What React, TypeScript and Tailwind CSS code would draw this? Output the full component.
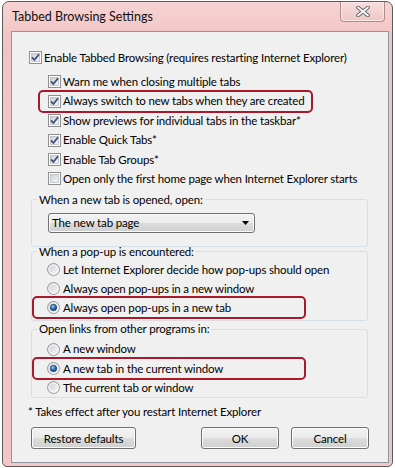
import React, { useId } from "react";

const Checkbox = ({ checked }: { checked: boolean }) => {
  const id = useId();
  return (
    <svg width="13" height="13" viewBox="0 0 13 13" className="shrink-0">
      <defs>
        <linearGradient id={id} x1="0" y1="0" x2="1" y2="1">
          <stop offset="0" stopColor="#cbcfd5" />
          <stop offset="1" stopColor="#f7f7f7" />
        </linearGradient>
      </defs>
      <rect x="0.5" y="0.5" width="12" height="12" fill="#ffffff" stroke="#8e8f8f" />
      <rect x="2.5" y="2.5" width="8" height="8" fill={`url(#${id})`} stroke="#b8bcc2" strokeWidth="0.8" />
      {checked && (
        <path d="M3 6.3 L5.4 9 L10 3.2" fill="none" stroke="#3d4f7c" strokeWidth="1.8" strokeLinejoin="round" />
      )}
    </svg>
  );
};

const Radio = ({ checked }: { checked: boolean }) => {
  const id = useId();
  return (
    <svg width="13" height="13" viewBox="0 0 13 13" className="shrink-0">
      <defs>
        <linearGradient id={id + "a"} x1="0" y1="0" x2="1" y2="1">
          <stop offset="0" stopColor="#c9ccd1" />
          <stop offset="1" stopColor="#fafafa" />
        </linearGradient>
        <radialGradient id={id + "b"} cx="0.4" cy="0.35" r="0.7">
          <stop offset="0" stopColor="#9fd0f5" />
          <stop offset="0.5" stopColor="#2f6fad" />
          <stop offset="1" stopColor="#173d6b" />
        </radialGradient>
      </defs>
      <circle cx="6.5" cy="6.5" r="6" fill={`url(#${id}a)`} stroke="#979a9e" />
      <circle cx="6.5" cy="6.5" r="4.5" fill="none" stroke="#ffffff" strokeWidth="0.8" />
      {checked && <circle cx="6.5" cy="6.5" r="3.3" fill={`url(#${id}b)`} stroke="#1f3f66" strokeWidth="0.6" />}
    </svg>
  );
};

const Highlight = ({ left, width }: { left: number; width: number }) => (
  <span
    className="absolute top-[-2px] h-[23px] border-[2.5px] border-[#a9192c] rounded-[5px] pointer-events-none"
    style={{ left, width }}
  />
);

const CheckRow = ({ label, checked, boxed }: { label: string; checked: boolean; boxed?: boolean }) => (
  <div className="relative h-[19.4px] flex items-center gap-[2px]">
    {boxed && <Highlight left={-10} width={275} />}
    <Checkbox checked={checked} />
    <span>{label}</span>
  </div>
);

const RadioRow = ({ label, checked, boxed }: { label: string; checked?: boolean; boxed?: boolean }) => (
  <div className="relative h-[19.2px] flex items-center gap-[3px]">
    {boxed && <Highlight left={-15} width={274} />}
    <Radio checked={!!checked} />
    <span>{label}</span>
  </div>
);

const Button = ({ label, width }: { label: string; width: string }) => (
  <button
    className={`${width} h-[22px] border border-[#707070] rounded-[3px] bg-[linear-gradient(#f2f2f2_0%,#ebebeb_50%,#dddddd_50%,#cfcfcf_100%)] shadow-[inset_0_0_0_1px_#fcfcfc] text-black leading-none`}
  >
    {label}
  </button>
);

export default function App() {
  return (
    <div className="w-[395px] h-[468px] bg-white pt-[1px] text-[11.5px] tracking-[-0.15px] leading-4 text-black whitespace-nowrap font-['Lato',sans-serif]">
      <div className="ml-[2px] w-[391px] h-[466px] border border-[#5b5b5b] rounded-t-[7px] rounded-b-[5px] bg-[linear-gradient(#f7d3d3,#f2c3c3_40px,#f3c6c6)] flex flex-col overflow-hidden">
        <div className="h-[29px] flex items-start justify-between pl-[9px] pr-[7px]">
          <span className="self-center text-[12.5px] tracking-normal text-[#111]">Tabbed Browsing Settings</span>
          <div className="w-[45px] h-[20px] border border-t-0 border-[#b08d8d] rounded-b-[4px] bg-[linear-gradient(#f8dede,#efc6c6)] shadow-[inset_0_0_0_1px_#fbe9e9] flex items-center justify-center">
            <svg width="14" height="11" viewBox="0 0 14 11">
              <path d="M2 1.5 L12 9.5 M12 1.5 L2 9.5" stroke="#5e5e66" strokeWidth="3.6" strokeLinecap="round" />
              <path d="M2 1.5 L12 9.5 M12 1.5 L2 9.5" stroke="#ffffff" strokeWidth="1.8" strokeLinecap="round" />
            </svg>
          </div>
        </div>
        <div className="flex-1 flex pl-[8px] pr-[3px] pb-[3px]">
          <div className="flex-1 flex flex-col border border-[#8d97a0] bg-[#f0f0f0]">
            <div className="mt-[16.3px] ml-[17px] h-[19.4px] flex items-center gap-[2px]">
              <Checkbox checked />
              <span>Enable Tabbed Browsing (requires restarting Internet Explorer)</span>
            </div>
            <div className="mt-[4.6px] ml-[36px] flex flex-col">
              <CheckRow label="Warn me when closing multiple tabs" checked />
              <CheckRow label="Always switch to new tabs when they are created" checked boxed />
              <CheckRow label="Show previews for individual tabs in the taskbar*" checked />
              <CheckRow label="Enable Quick Tabs*" checked />
              <CheckRow label="Enable Tab Groups*" checked />
              <CheckRow label="Open only the first home page when Internet Explorer starts" checked={false} />
            </div>

            <fieldset className="mt-[3.3px] ml-[19px] w-[337px] border border-[#d5dfe5] rounded-[3px]">
              <legend className="ml-[5px] px-[2px] leading-4">When a new tab is opened, open:</legend>
              <div className="mt-[5px] mb-[13px] ml-[16px] w-[207px] h-[20px] border border-[#707070] rounded-[3px] bg-[linear-gradient(#f2f2f2_0%,#ebebeb_50%,#dddddd_50%,#cfcfcf_100%)] shadow-[inset_0_0_0_1px_#fcfcfc] flex items-center justify-between pl-[3px] pr-[4px]">
                <span>The new tab page</span>
                <svg width="8" height="4" viewBox="0 0 8 4">
                  <path d="M0 0 H7 L3.5 4 Z" fill="#000" />
                </svg>
              </div>
            </fieldset>

            <fieldset className="-mt-[3px] ml-[19px] w-[337px] border border-[#d5dfe5] rounded-[3px]">
              <legend className="ml-[5px] px-[2px] leading-4">When a pop-up is encountered:</legend>
              <div className="ml-[15px] mb-[3px] flex flex-col">
                <RadioRow label="Let Internet Explorer decide how pop-ups should open" />
                <RadioRow label="Always open pop-ups in a new window" />
                <RadioRow label="Always open pop-ups in a new tab" checked boxed />
              </div>
            </fieldset>

            <fieldset className="ml-[19px] w-[337px] border border-[#d5dfe5] rounded-[3px]">
              <legend className="ml-[5px] px-[2px] leading-4">Open links from other programs in:</legend>
              <div className="mt-[2.4px] ml-[15px] flex flex-col">
                <RadioRow label="A new window" />
                <RadioRow label="A new tab in the current window" checked boxed />
                <RadioRow label="The current tab or window" />
              </div>
            </fieldset>

            <div className="mt-[6px] ml-[16px] h-4">* Takes effect after you restart Internet Explorer</div>

            <div className="mt-[7px] ml-[19px] flex">
              <Button label="Restore defaults" width="w-[105px]" />
              <div className="ml-[65px]">
                <Button label="OK" width="w-[78px]" />
              </div>
              <div className="ml-[12px]">
                <Button label="Cancel" width="w-[78px]" />
              </div>
            </div>
          </div>
        </div>
      </div>
    </div>
  );
}
